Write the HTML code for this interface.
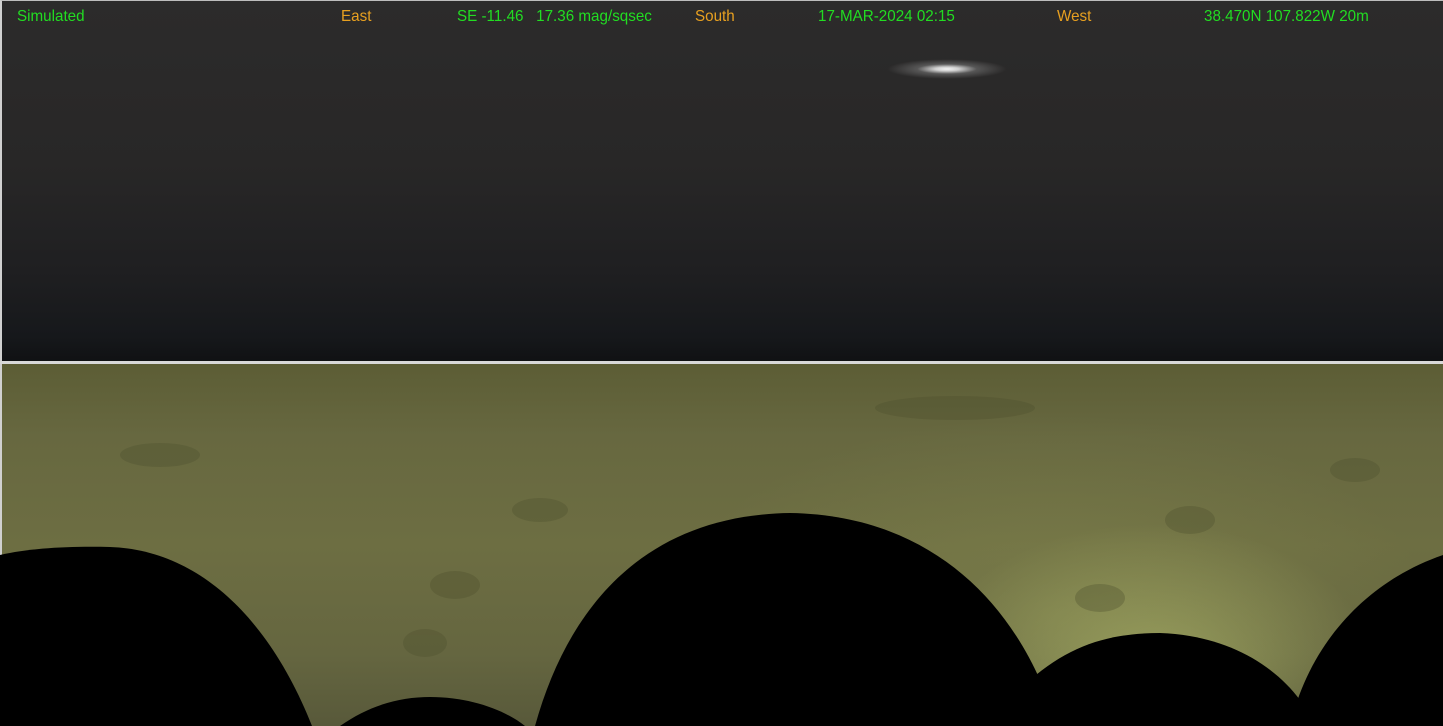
<!DOCTYPE html>
<html><head><meta charset="utf-8"><style>
html,body{margin:0;padding:0;overflow:hidden;width:1443px;height:726px;}
body{background:#000;font-family:"Liberation Sans",Arial,sans-serif;}
#wrap{position:relative;width:1443px;height:726px;overflow:hidden;}
#sky{position:absolute;left:0;top:0;width:1443px;height:362px;background:linear-gradient(#2c2b2b 0%,#282727 45%,#1f1f21 75%,#16181b 93%,#101113 100%);border-top:1px solid #bdbdbd;border-left:2px solid #d0d0d0;box-sizing:border-box;}
#hline{position:absolute;left:0;top:361px;width:1443px;height:3px;background:#d8d8d8;}
#ground{position:absolute;left:0;top:364px;width:1443px;height:362px;border-left:2px solid #d0d0d0;box-sizing:border-box;
background:
radial-gradient(ellipse 220px 140px at 1150px 300px,rgba(190,200,115,.5),rgba(190,200,115,0) 100%),
radial-gradient(ellipse 380px 200px at 1050px 250px,rgba(150,155,90,.3),rgba(0,0,0,0) 100%),
linear-gradient(#5c5d35 0%,#676840 20%,#6d6e42 50%,#656640 80%,#58593a 100%);}
.t{position:absolute;top:8px;font-size:16px;color:#22dd22;white-space:nowrap;transform:scaleX(.95);transform-origin:left;}
.o{color:#e8a020;}
#sun{position:absolute;left:887px;top:59px;width:120px;height:20px;border-radius:50%;background:radial-gradient(ellipse at center,#f4f4f4 0%,#cfcfcf 14%,rgba(140,140,140,.45) 35%,rgba(60,60,60,0) 70%);}
svg{position:absolute;left:0;top:0;overflow:hidden;display:block;}
</style></head><body><div id="wrap">
<div id="sky"></div>
<div id="sun"></div>
<div id="hline"></div>
<div id="ground"></div>
<svg width="1443" height="726" viewBox="0 0 1443 726">
<g fill="#4e4f2d" opacity=".35">
<ellipse cx="455" cy="585" rx="25" ry="14"/><ellipse cx="425" cy="643" rx="22" ry="14"/>
<ellipse cx="540" cy="510" rx="28" ry="12"/><ellipse cx="1190" cy="520" rx="25" ry="14"/>
<ellipse cx="1355" cy="470" rx="25" ry="12"/><ellipse cx="1100" cy="598" rx="25" ry="14"/>
<ellipse cx="160" cy="455" rx="40" ry="12"/><ellipse cx="955" cy="408" rx="80" ry="12"/>
</g>
<path fill="#000" d="M0,726 L0,555 C30,548 70,546 110,547 C200,550 270,620 312,726 Z"/>
<path fill="#000" d="M340,726 C370,705 400,697 430,697 C470,697 505,710 525,726 Z"/>
<path fill="#000" d="M535,726 C570,600 650,515 790,513 C920,515 1000,590 1040,680 L1040,726 Z"/>
<path fill="#000" d="M1030,726 L1030,680 C1070,645 1110,633 1160,633 C1220,635 1270,660 1300,700 L1300,726 Z"/>
<path fill="#000" d="M1290,726 C1310,640 1370,580 1443,555 L1443,726 Z"/>
</svg>
<div class="t" style="left:17px">Simulated</div>
<div class="t o" style="left:341px">East</div>
<div class="t" style="left:457px">SE -11.46&nbsp;&nbsp;&nbsp;17.36 mag/sqsec</div>
<div class="t o" style="left:695px">South</div>
<div class="t" style="left:818px">17-MAR-2024 02:15</div>
<div class="t o" style="left:1057px">West</div>
<div class="t" style="left:1204px">38.470N 107.822W 20m</div>
</div></body></html>
